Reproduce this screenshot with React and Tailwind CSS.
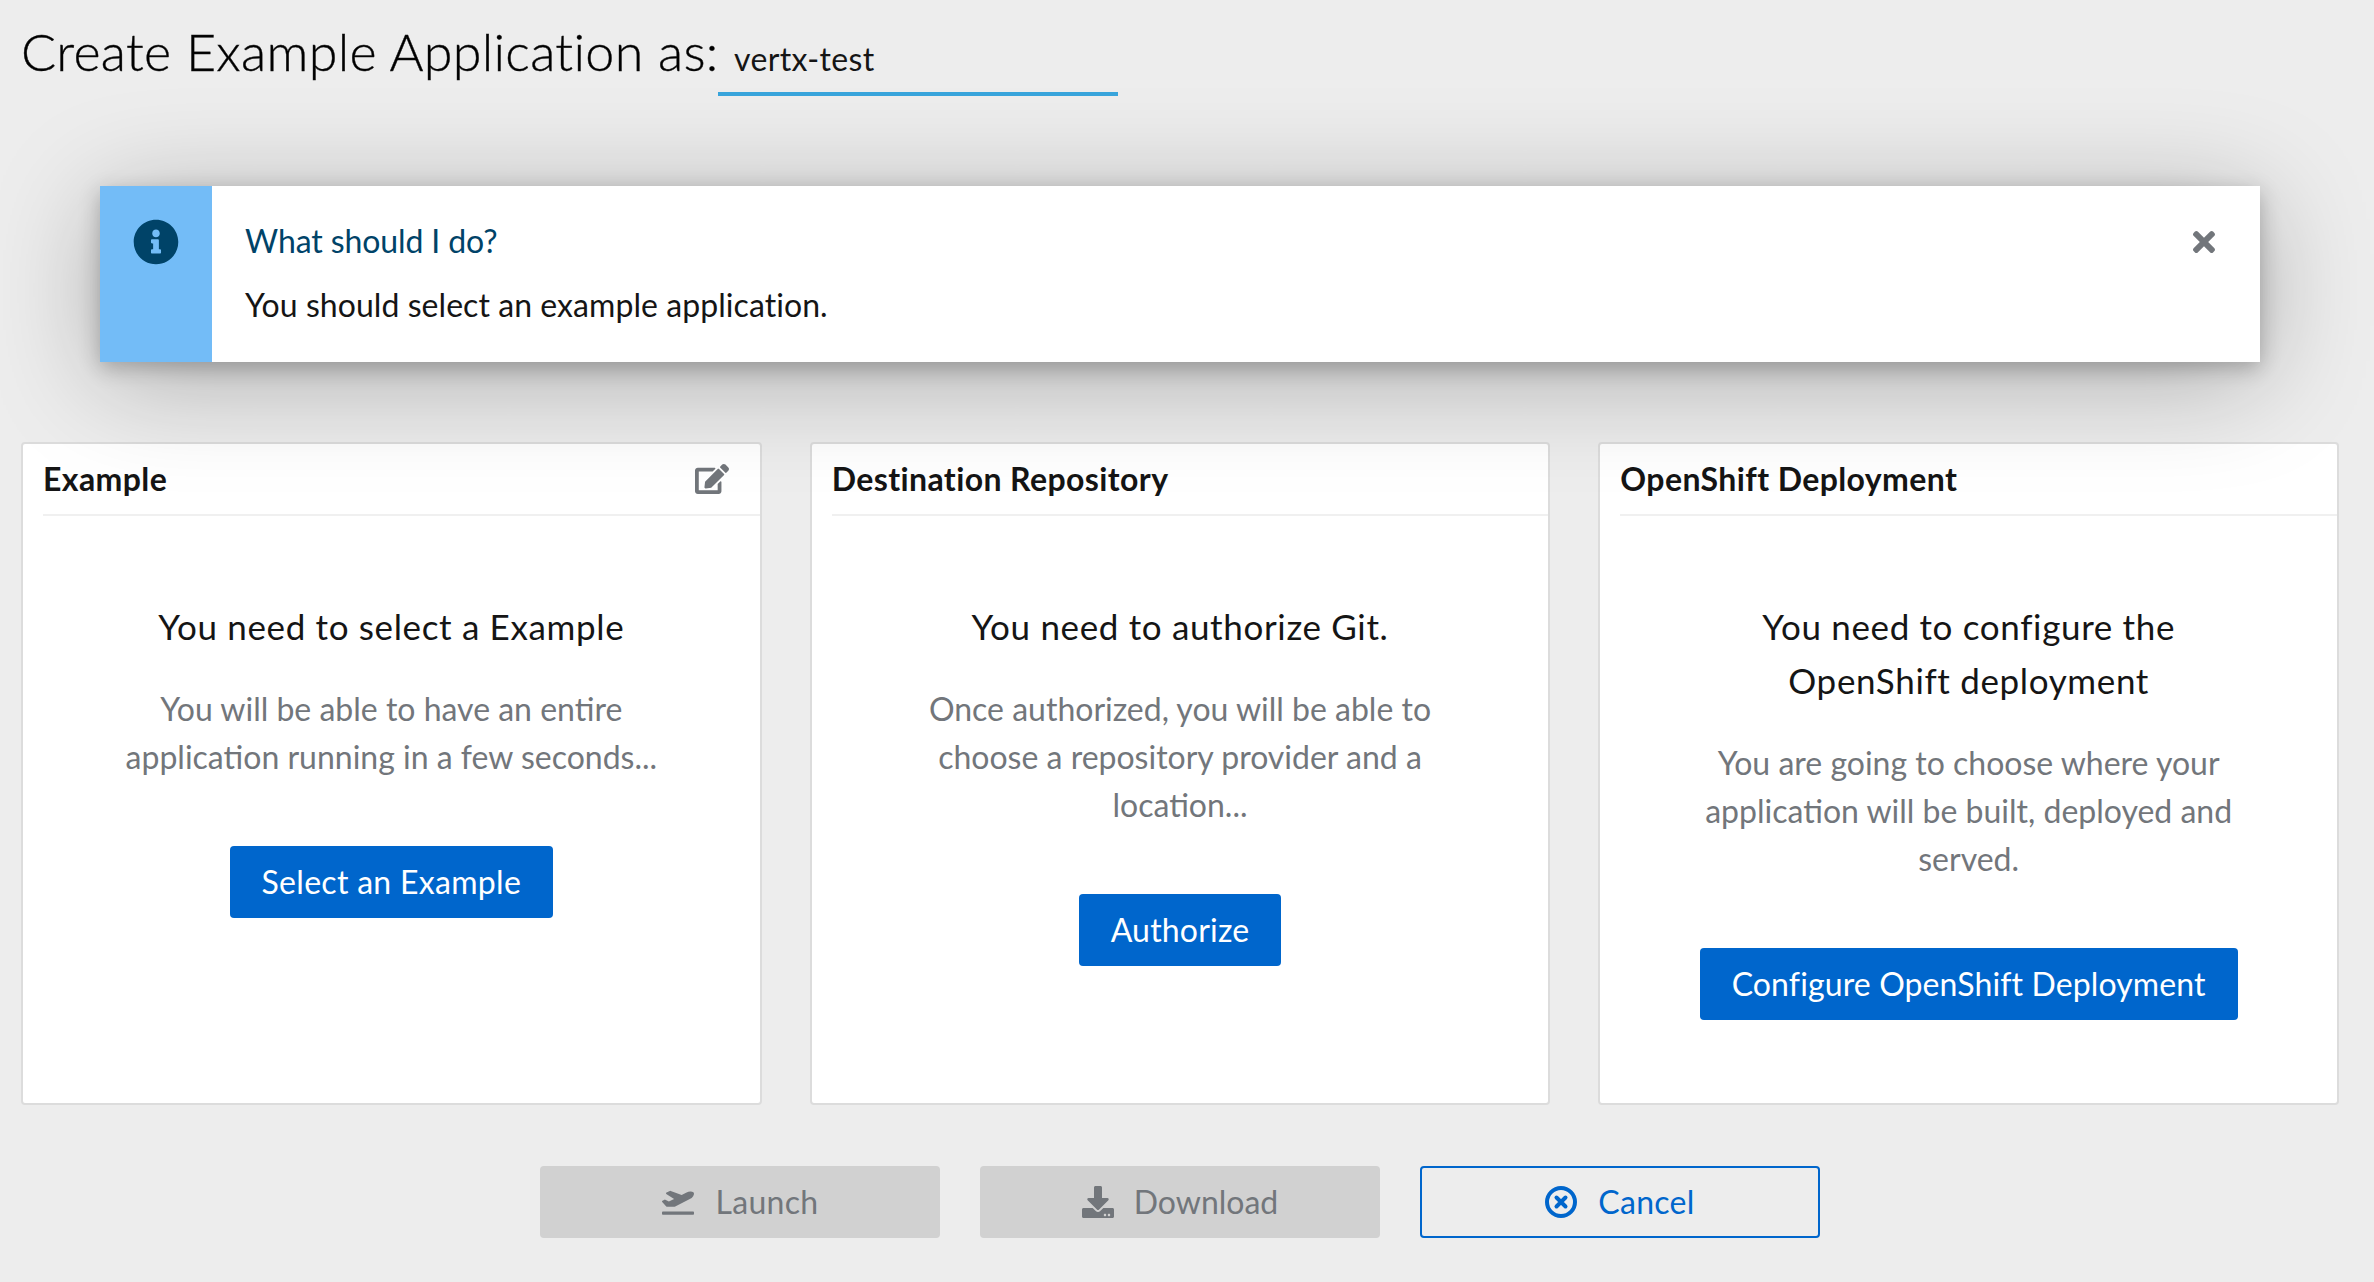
import React from "react";
import { FaEdit, FaTimes, FaInfoCircle, FaPlaneDeparture, FaDownload } from "react-icons/fa";

const Card = ({ title, icon, heading, text, cta, ctaClass }) => (
  <div className="flex-1 h-[663px] bg-white border-2 border-[#dcdcdc] rounded-[4px] pl-[20px] flex flex-col">
    <div className="h-[72px] shrink-0 border-b-2 border-[#f0f0f0] flex items-center justify-between pr-[31px]">
      <span className="text-[32px] font-bold text-[#151515] leading-none tracking-[0.4px] -mt-[1px]">{title}</span>
      {icon}
    </div>
    <div className="pr-[20px] pt-[83px] flex flex-col items-center text-center">
      <h2 className="text-[35px] leading-[54px] text-[#151515] tracking-[0.65px] w-[560px]">{heading}</h2>
      <p className="mt-[32px] text-[32px] leading-[48px] text-[#72767b] w-[560px]">{text}</p>
      <button className={`mt-[65px] h-[72px] px-[32px] bg-[#0066cc] text-white text-[32px] rounded-[4px] ${ctaClass}`}>{cta}</button>
    </div>
  </div>
);

const CancelIcon = () => (
  <svg viewBox="0 0 32 32" className="w-[32px] h-[32px]" fill="none" stroke="currentColor">
    <circle cx="16" cy="16" r="14" strokeWidth="4" />
    <path d="M11.5 11.5 L20.5 20.5 M20.5 11.5 L11.5 20.5" strokeWidth="4" strokeLinecap="round" />
  </svg>
);

export default function App() {
  return (
    <div className="relative min-h-[1282px] bg-[#ededed] overflow-hidden font-['Lato',sans-serif] text-[#151515]">
      <div className="flex items-start pl-[21px] pt-[20px] h-[186px]">
        <h1 className="text-[52px] font-light leading-[62px] w-[697px] whitespace-nowrap tracking-[0.3px] text-black [-webkit-text-stroke:0.4px_#151515]">Create Example Application as:</h1>
        <div className="w-[400px] h-[76px] border-b-4 border-[#39a5dc] text-[32px] pt-[15px] pl-[16px] tracking-[0.35px]">vertx-test</div>
      </div>
      <div className="relative z-10 mx-[100px] w-[2160px] h-[176px] bg-white flex shadow-[0_6px_20px_rgba(0,0,0,0.24),0_16px_110px_rgba(0,0,0,0.28)]">
        <div className="w-[112px] bg-[#73bcf7] flex justify-center pt-[33px]">
          <FaInfoCircle className="text-[#004368] w-[46px] h-[46px]" />
        </div>
        <div className="flex-1 pl-[33px] pt-[35px]">
          <div className="text-[32px] leading-[40px] text-[#004368] tracking-[-0.1px]">What should I do?</div>
          <div className="text-[32px] leading-[40px] mt-[24px] tracking-[0.06px]">You should select an example application.</div>
        </div>
        <div className="pr-[40px] pt-[40px]"><FaTimes className="text-[#72767b] w-[32px] h-[32px]" /></div>
      </div>
      <div className="flex gap-[48px] pl-[21px] pr-[35px] mt-[80px]">
        <Card title="Example" icon={<FaEdit className="text-[#72767b] w-[34px] h-[32px]" />}
          heading="You need to select a Example"
          text="You will be able to have an entire application running in a few seconds..."
          cta="Select an Example" ctaClass="tracking-[0.3px]" />
        <Card title="Destination Repository"
          heading="You need to authorize Git."
          text="Once authorized, you will be able to choose a repository provider and a location..."
          cta="Authorize" ctaClass="tracking-[0.2px]" />
        <Card title="OpenShift Deployment"
          heading="You need to configure the OpenShift deployment"
          text="You are going to choose where your application will be built, deployed and served."
          cta="Configure OpenShift Deployment" ctaClass="tracking-[0.12px]" />
      </div>
      <div className="flex justify-center gap-[40px] mt-[61px] pr-[14px]">
        <button className="w-[400px] h-[72px] rounded-[4px] bg-[#d1d1d1] text-[#72767b] text-[32px] tracking-[0.3px] flex items-center justify-center gap-[22px]"><FaPlaneDeparture className="w-[32px] h-[26px]" />Launch</button>
        <button className="w-[400px] h-[72px] rounded-[4px] bg-[#d1d1d1] text-[#72767b] text-[32px] flex items-center justify-center gap-[20px]"><FaDownload className="w-[32px] h-[32px]" />Download</button>
        <button className="w-[400px] h-[72px] rounded-[4px] border-2 border-[#0066cc] text-[#0066cc] text-[32px] tracking-[0.3px] flex items-center justify-center gap-[21px]"><CancelIcon />Cancel</button>
      </div>
    </div>
  );
}
